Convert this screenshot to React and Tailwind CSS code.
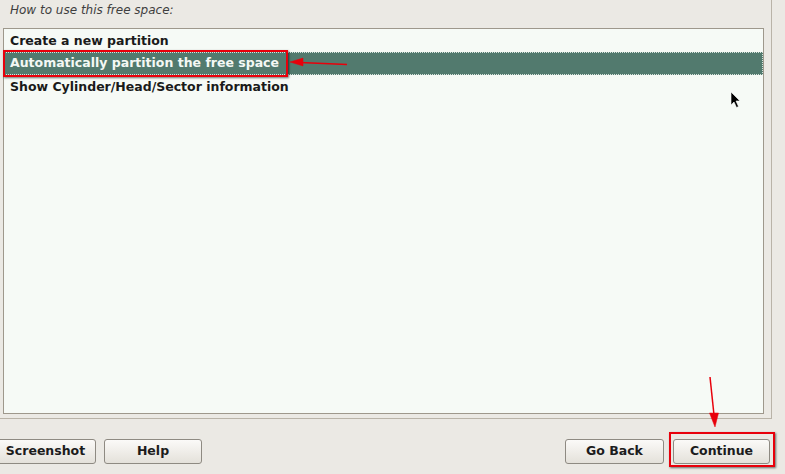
import React from 'react';

const rows = [
  'Create a new partition',
  'Automatically partition the free space',
  'Show Cylinder/Head/Sector information',
];

const Button = ({ children, className = '' }) => (
  <div
    className={`h-[25px] flex items-center justify-center rounded-[3px] border border-[#8e8a82] bg-gradient-to-b from-[#fbfaf8] to-[#e4e1da] text-[12.5px] font-bold text-[#1c1c1c] ${className}`}
  >
    {children}
  </div>
);

export default function App() {
  return (
    <div className="relative w-[785px] h-[474px] overflow-hidden bg-[#ebe9e4] font-['DejaVu_Sans',sans-serif]">
      <div className="w-[772px] h-[419px] border-r border-b border-[#b9b3a8] flex flex-col">
        <div className="h-[28px] pl-[10px] text-[12px] italic text-[#3e3e3e] leading-[20px]">
          How to use this free space:
        </div>
        <div className="ml-[3px] w-[761px] h-[386px] border border-[#9e988c] bg-[#f6faf6]">
          {rows.map((r, i) => (
            <div
              key={r}
              className={
                i === 1
                  ? 'h-[23px] flex items-center pl-[5px] text-[12.5px] font-bold text-[#f4f8f4] bg-[#527a6e] border border-dotted border-[#d8e4de]'
                  : 'h-[23px] flex items-center pl-[6px] pt-[1px] text-[12.5px] font-bold text-[#1a1a1a]'
              }
            >
              {r}
            </div>
          ))}
        </div>
      </div>

      <div className="flex items-center justify-between pt-[20px] pr-[15px]">
        <div className="flex gap-[8px] ml-[-5px]">
          <Button className="w-[101px]">Screenshot</Button>
          <Button className="w-[98px]">Help</Button>
        </div>
        <div className="flex gap-[9px]">
          <Button className="w-[99px]">Go Back</Button>
          <Button className="w-[97px]">Continue</Button>
        </div>
      </div>

      {/* red annotation boxes */}
      <div className="absolute left-[3px] top-[50px] w-[285px] h-[27px] border-2 border-[#e8000b] shadow-[1px_1px_2px_rgba(0,0,0,0.55)]" />
      <div className="absolute left-[669px] top-[432px] w-[106px] h-[35px] border-2 border-[#e8000b] shadow-[1px_1px_2px_rgba(0,0,0,0.55)]" />

      <svg className="absolute left-0 top-0" width="785" height="474">
        <g fill="#e8000b" stroke="#e8000b">
          <line x1="347" y1="64.5" x2="300" y2="62.5" strokeWidth="1.5" />
          <polygon points="290,62 303,58 303,66" strokeWidth="0.5" />
          <line x1="710" y1="377" x2="714" y2="415" strokeWidth="1.5" />
          <polygon points="715,427 709.5,413 718.5,413" strokeWidth="0.5" />
        </g>
        <path
          d="M731 92 L731 105 L734 102 L736.5 107.5 L738.5 106.5 L736 101 L740 101 Z"
          fill="#000"
          stroke="#fff"
          strokeWidth="0.6"
        />
      </svg>
    </div>
  );
}
